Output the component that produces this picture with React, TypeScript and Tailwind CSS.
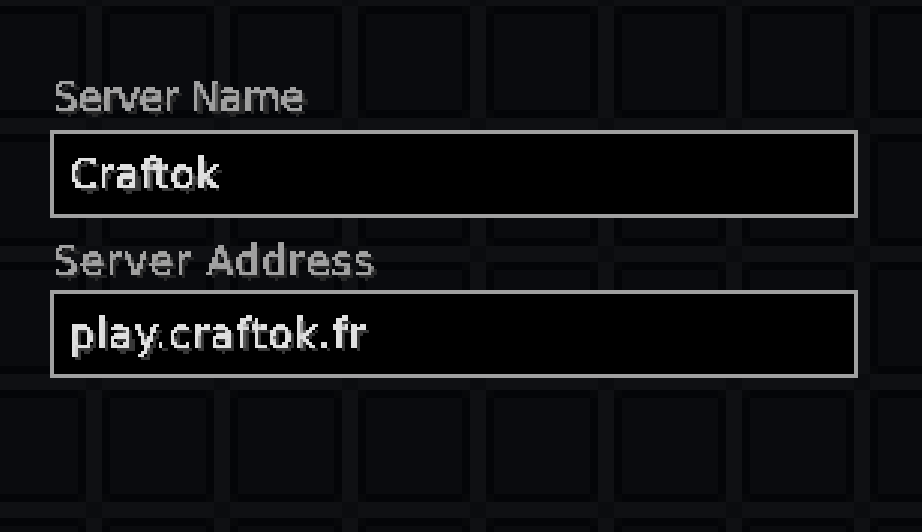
export default function App() {
  return (
    <div className="relative w-[922px] h-[532px] overflow-hidden bg-[#0a0b0e]">
      <svg className="absolute inset-0" width="922" height="532" shapeRendering="crispEdges">
        <defs>
          <pattern id="tile" width="128" height="128" patternUnits="userSpaceOnUse">
            <rect x="78" width="32" height="128" fill="#040508" />
            <rect y="6" width="128" height="8" fill="#040508" />
            <rect y="110" width="128" height="8" fill="#040508" />
            <rect x="78" y="6" width="8" height="8" fill="#07080a" />
            <rect x="102" y="6" width="8" height="8" fill="#07080a" />
            <rect x="78" y="110" width="8" height="8" fill="#07080a" />
            <rect x="102" y="110" width="8" height="8" fill="#07080a" />
            <rect x="86" width="16" height="128" fill="#0f1013" />
            <rect y="118" width="128" height="10" fill="#0f1013" />
            <rect y="0" width="128" height="6" fill="#0f1013" />
            <rect x="86" y="118" width="16" height="10" fill="#0b0c0f" />
            <rect x="86" y="0" width="16" height="6" fill="#0b0c0f" />
          </pattern>
          <filter id="px" x="0" y="0" width="100%" height="100%" colorInterpolationFilters="sRGB">
            <feFlood x="1" y="1" width="1" height="1" />
            <feComposite width="3" height="3" />
            <feTile result="grid" />
            <feComposite in="SourceGraphic" in2="grid" operator="in" />
            <feMorphology operator="dilate" radius="1" />
            <feComponentTransfer>
              <feFuncA type="discrete" tableValues="0 1 1 1" />
            </feComponentTransfer>
          </filter>
        </defs>
        <rect width="922" height="532" fill="url(#tile)" />
      </svg>
      <div className="relative flex flex-col px-[50px] pt-[72px] font-['DejaVu_Sans','Liberation_Sans',sans-serif] text-[40px] leading-[50px]">
        <div className="h-[58px] pl-[3px] text-[#a0a0a0] [-webkit-text-stroke:0.8px_#a0a0a0] [text-shadow:4px_4px_0_#282828] [filter:url(#px)] tracking-[-1px]">
          Server Name
        </div>
        <div className="flex items-center w-[808px] h-[88px] px-[15px] border-4 border-[#a0a0a0] bg-black">
          <span className="text-[#e0e0e0] [-webkit-text-stroke:0.8px_#e0e0e0] [text-shadow:4px_4px_0_#383838] [filter:url(#px)] tracking-[0.7px]">Craftok</span>
        </div>
        <div className="h-[72px] pt-[18px] pl-[3px] text-[#a0a0a0] [-webkit-text-stroke:0.8px_#a0a0a0] [text-shadow:4px_4px_0_#282828] [filter:url(#px)] tracking-[1.4px]">
          Server Address
        </div>
        <div className="flex items-center w-[808px] h-[88px] px-[15px] border-4 border-[#a0a0a0] bg-black">
          <span className="text-[#e0e0e0] [-webkit-text-stroke:0.8px_#e0e0e0] [text-shadow:4px_4px_0_#383838] [filter:url(#px)] tracking-[1.5px]">play.craftok.fr</span>
        </div>
      </div>
    </div>
  );
}
